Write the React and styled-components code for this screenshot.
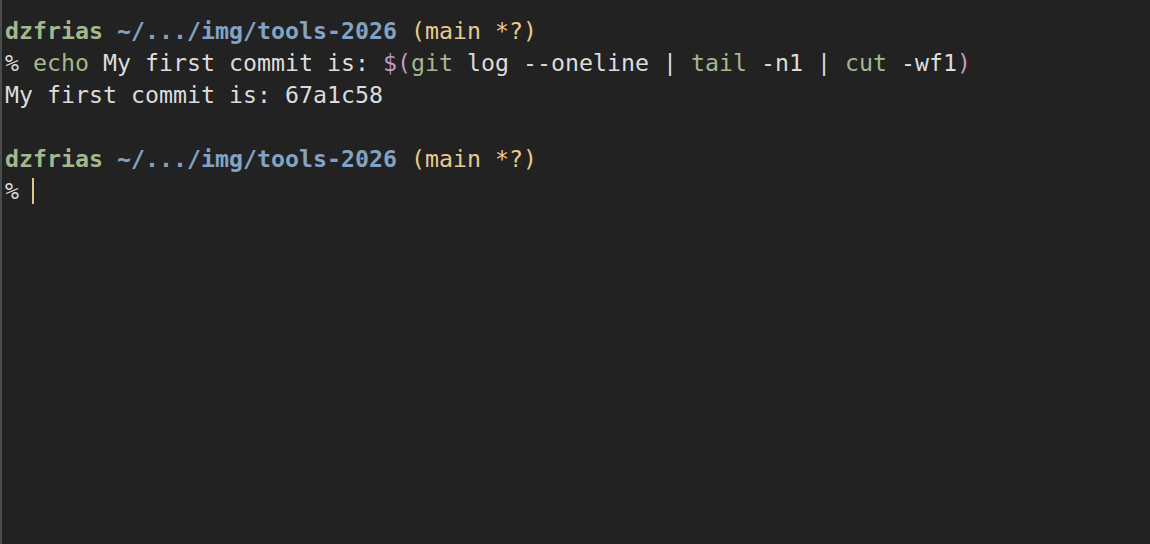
import React from "react";
import styled, { createGlobalStyle } from "styled-components";

const Global = createGlobalStyle`
  html, body { margin: 0; padding: 0; background: #222222; }
  #root { height: 544px; }
`;

const Window = styled.div`
  box-sizing: border-box;
  width: 1150px;
  height: 544px;
  background: #222222;
  border-left: 2px solid #4b4b4b;
  padding: 15px 0 0 3px;
  font-family: "DejaVu Sans Mono", "Liberation Mono", monospace;
  font-size: 23.25px;
  line-height: 32px;
  color: #dcdcdc;
  overflow: hidden;
`;

const Line = styled.div`
  height: 32px;
  white-space: pre;
  display: flex;
  align-items: center;
`;

const Seg = styled.span`
  color: ${(p) => p.$c || "inherit"};
  font-weight: ${(p) => (p.$bold ? 700 : 400)};
`;

const Cursor = styled.span`
  display: inline-block;
  width: 1.5px;
  height: 26px;
  background: #e4c48a;
  margin-left: -1px;
`;

const C = {
  green: "#a6b78a",
  blue: "#84a3c3",
  yellow: "#e9ca8e",
  purple: "#c19bc2",
  text: "#dcdcdc",
};

const Prompt = () => (
  <Line>
    <Seg $c={C.green} $bold>dzfrias</Seg>
    <Seg> </Seg>
    <Seg $c={C.blue} $bold>~/.../img/tools-2026</Seg>
    <Seg> </Seg>
    <Seg $c={C.yellow}>(main *?)</Seg>
  </Line>
);

export default function App() {
  return (
    <>
      <Global />
      <Window>
        <Prompt />
        <Line>
          <Seg>% </Seg>
          <Seg $c={C.green}>echo</Seg>
          <Seg> My first commit is: </Seg>
          <Seg $c={C.purple}>$(</Seg>
          <Seg $c={C.green}>git</Seg>
          <Seg> log --oneline | </Seg>
          <Seg $c={C.green}>tail</Seg>
          <Seg> -n1 | </Seg>
          <Seg $c={C.green}>cut</Seg>
          <Seg> -wf1</Seg>
          <Seg $c={C.purple}>)</Seg>
        </Line>
        <Line>My first commit is: 67a1c58</Line>
        <Line />
        <Prompt />
        <Line>
          <Seg>% </Seg>
          <Cursor />
        </Line>
      </Window>
    </>
  );
}
